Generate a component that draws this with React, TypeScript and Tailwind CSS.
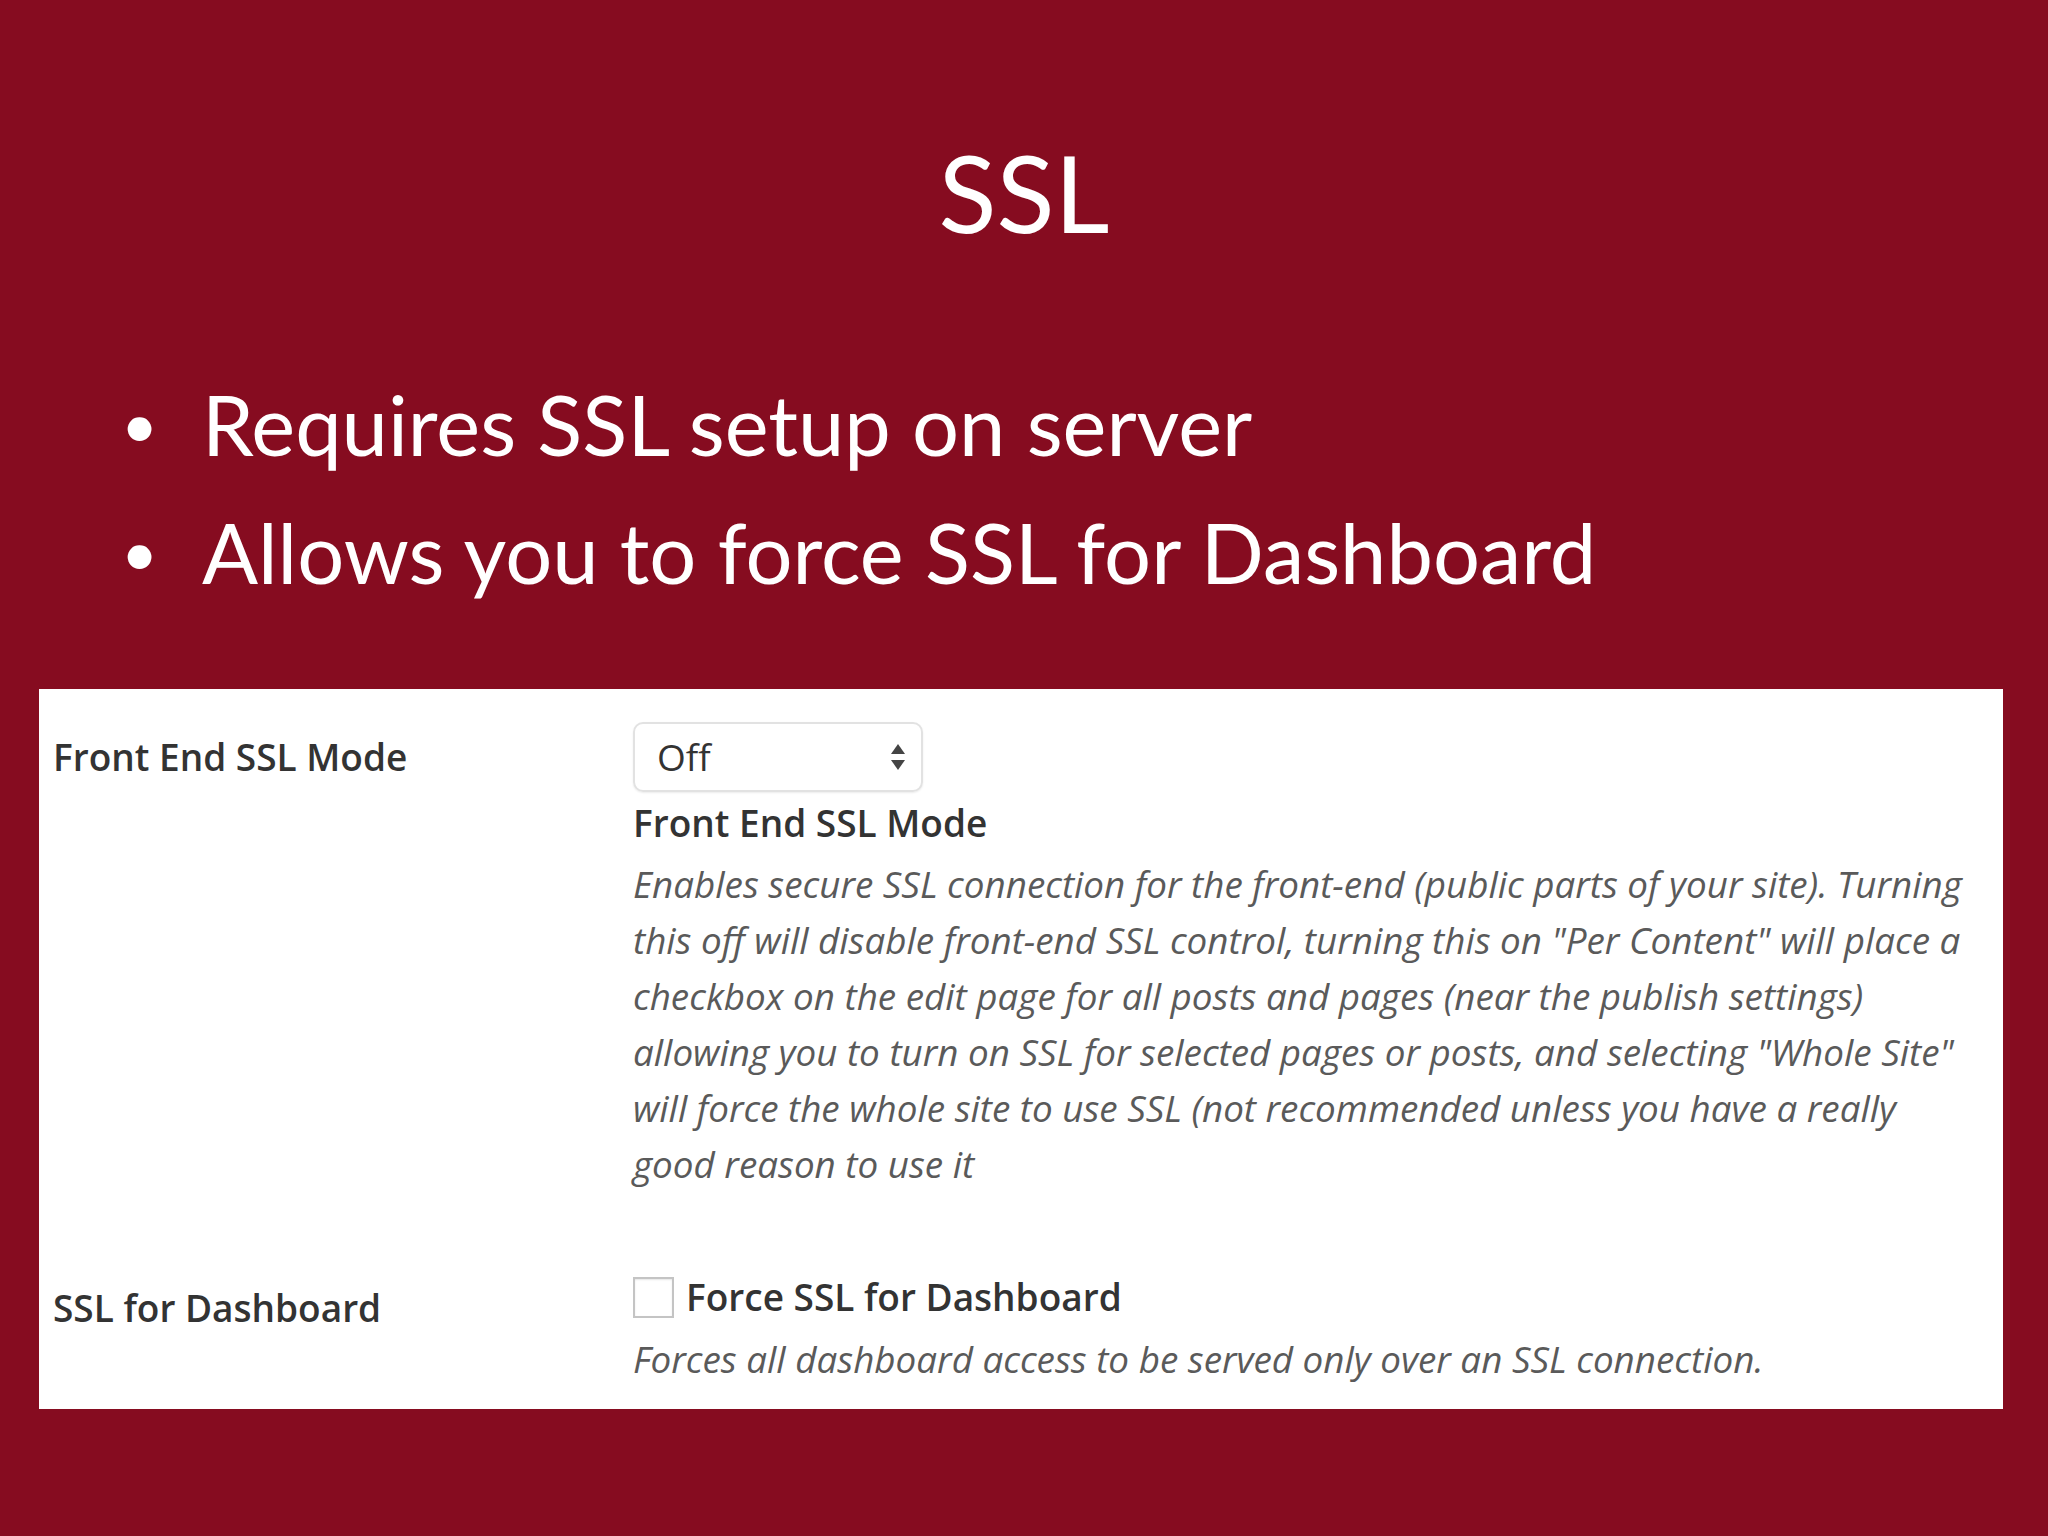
import React from 'react';

const slideFont = { fontFamily: 'Lato, "Noto Sans", sans-serif' };
const wpFont = { fontFamily: '"Open Sans", "Noto Sans", sans-serif' };

const DESC_LINES = [
  'Enables secure SSL connection for the front-end (public parts of your site). Turning',
  'this off will disable front-end SSL control, turning this on "Per Content" will place a',
  'checkbox on the edit page for all posts and pages (near the publish settings)',
  'allowing you to turn on SSL for selected pages or posts, and selecting "Whole Site"',
  'will force the whole site to use SSL (not recommended unless you have a really',
  'good reason to use it',
];

function SelectArrows() {
  return (
    <svg width="18" height="30" viewBox="0 0 18 30" className="block">
      <path d="M9 2 L16 12 L2 12 Z" fill="#444" />
      <path d="M9 28 L16 18 L2 18 Z" fill="#444" />
    </svg>
  );
}

export default function App() {
  return (
    <div className="w-[2048px] h-[1536px] bg-[#860c20] flex flex-col overflow-hidden">
      {/* title */}
      <h1 style={slideFont} className="text-white text-center text-[107px] leading-[140px] pt-[122px] font-normal">
        SSL
      </h1>

      {/* bullets */}
      <ul style={slideFont} className="mt-[98px] pl-[121px] text-white text-[83px] leading-[128px]">
        <li className="flex items-center">
          <span className="w-[81px] text-[64px]">•</span>
          <span>Requires SSL setup on server</span>
        </li>
        <li className="flex items-center">
          <span className="w-[81px] text-[64px]">•</span>
          <span>Allows you to force SSL for Dashboard</span>
        </li>
      </ul>

      {/* settings screenshot */}
      <div style={wpFont} className="mt-[73px] ml-[39px] w-[1964px] h-[720px] bg-white pl-[14px] pt-[33px]">
        <div className="grid grid-cols-[580px_1fr]">
          <div className="h-[70px] flex items-center text-[37px] font-semibold text-[#333]">Front End SSL Mode</div>
          <div>
            <div className="w-[290px] h-[70px] rounded-[10px] border-2 border-[#e2e2e2] shadow-[0_1px_2px_rgba(0,0,0,0.08)] flex items-center justify-between pl-[22px] pr-[14px]">
              <span className="text-[37px] text-[#333]">Off</span>
              <SelectArrows />
            </div>
            <div className="mt-[8px] text-[37px] leading-[46px] font-semibold text-[#333]">Front End SSL Mode</div>
            <div className="mt-[10px] italic text-[36.8px] leading-[56px] text-[#5a5a5a] whitespace-nowrap">
              {DESC_LINES.map((l, i) => (
                <div key={i}>{l}</div>
              ))}
            </div>
          </div>
        </div>

        <div className="grid grid-cols-[580px_1fr] mt-[82px]">
          <div className="pt-[11px] text-[37px] leading-[46px] font-semibold text-[#333]">SSL for Dashboard</div>
          <div>
            <div className="flex items-center gap-[12px]">
              <span className="w-[41px] h-[41px] border-2 border-[#c4c4c4] bg-white shadow-[inset_0_1px_2px_rgba(0,0,0,0.1)]" />
              <span className="text-[37px] leading-[46px] font-semibold text-[#333]">Force SSL for Dashboard</span>
            </div>
            <div className="mt-[16px] italic text-[36.8px] leading-[46px] text-[#5a5a5a] whitespace-nowrap">
              Forces all dashboard access to be served only over an SSL connection.
            </div>
          </div>
        </div>
      </div>
    </div>
  );
}
